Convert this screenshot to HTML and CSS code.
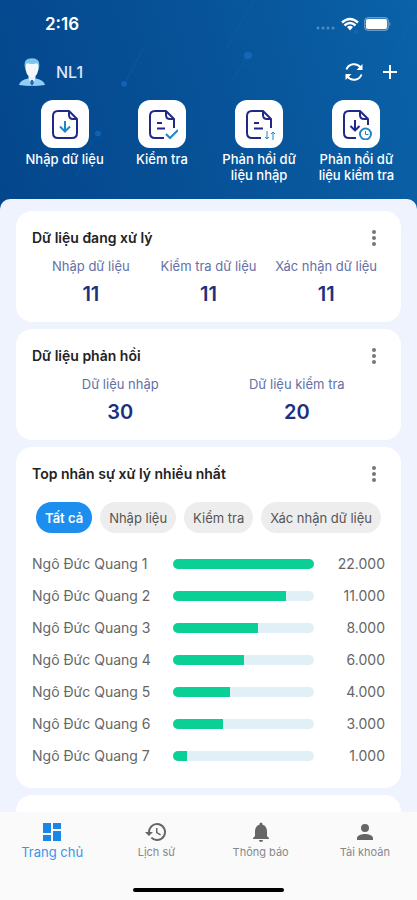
FILE: index.html
```html
<!DOCTYPE html>
<html lang="vi">
<head>
<meta charset="utf-8">
<meta name="viewport" content="width=device-width, initial-scale=1">
<title>Trang chủ</title>
<link rel="stylesheet" href="styles.css">
</head>
<body>
<header class="hero">
  <svg class="hero-art" viewBox="0 0 417 220" preserveAspectRatio="none" aria-hidden="true">
    <g stroke="#2680c8" stroke-opacity=".18" fill="none">
      <path d="M254 0L225 54M248 58L232 86M417 16L394 56M352 190L375 151M124 90L144 50M76 188L92 150"/>
    </g>
    <g fill="#1e78d0" fill-opacity=".5">
      <circle cx="124" cy="89" r="3"/><circle cx="248" cy="59" r="4"/><circle cx="98" cy="142" r="3"/><circle cx="356" cy="34" r="2" fill-opacity=".4"/>
    </g>
  </svg>
  <div class="status">
    <span class="time">2:16</span>
    <svg width="76" height="14" viewBox="0 0 76 14" aria-hidden="true">
      <g fill="#fff" fill-opacity=".3"><circle cx="3" cy="11" r="1.500"/><circle cx="8" cy="11" r="1.500"/><circle cx="13" cy="11" r="1.500"/><circle cx="18" cy="11" r="1.500"/></g>
      <g fill="none" stroke="#fff" stroke-width="2.500"><path d="M27 5.500Q35-1.500 43 5.500M29.500 8.500Q35 3.500 40.500 8.500"/></g>
      <path d="M32 10Q35 7.500 38 10L35 13.500z" fill="#fff"/>
      <rect x="49.500" y=".5" width="24" height="13" rx="3.500" fill="#fff" fill-opacity=".2" stroke="#fff" stroke-opacity=".3"/>
      <rect x="51" y="2" width="21" height="10" rx="2" fill="#fff"/>
      <path d="M74.500 5q2 2 0 4z" fill="#fff" fill-opacity=".5"/>
    </svg>
  </div>
  <div class="account">
    <svg width="26" height="28" viewBox="0 0 26 28" aria-hidden="true">
      <path d="M0 27Q1 22 9 20.500L13 24L17 20.500Q25 22 26 27Q13 29 0 27z" fill="#8fd0f4"/>
      <path d="M9.500 17v4l3.500 6 3.500-6v-4z" fill="#e6f3fb"/>
      <path d="M12 22h2l1 3-2 3-2-3z" fill="#2c6ca8"/>
      <path d="M6 6Q6 18 13 20Q20 18 20 6Q13 1 6 6z" fill="#f4f8fd"/>
      <path d="M6 10Q4 1 11 .5Q22-1 20 10L18.500 5Q13 7 7.500 5z" fill="#82c4e8"/>
    </svg>
    <span class="user">NL1</span>
    <button class="bare" type="button" aria-label="Làm mới">
      <svg width="20" height="20" viewBox="0 0 20 20" fill="none" stroke="#fff" stroke-width="2"><path d="M2.500 7.500A8 8 0 0 1 16.500 5.500M17.500 12.500A8 8 0 0 1 3.500 14.500"/><path d="M18.500 2v6h-6zM1.500 18v-6h6z" fill="#fff" stroke="none"/></svg>
    </button>
    <button class="bare" type="button" aria-label="Thêm">
      <svg width="16" height="16" viewBox="0 0 16 16" fill="none" stroke="#fff" stroke-width="2"><path d="M8 1v14M1 8h14"/></svg>
    </button>
  </div>
  <nav class="actions" aria-label="Chức năng">
    <a href="#nhap"><span class="tile"><svg width="32" height="32" viewBox="0 0 32 32"><path class="doc" d="M20 3H9Q4 3 4 8v17q0 5 5 5h14q5 0 5-5V11zM20 3v4q0 4 4 4h4"/><path class="accent" d="M16 13v10M11 18.500l5 5 5-5"/></svg></span>Nhập dữ liệu</a>
    <a href="#kiemtra"><span class="tile"><svg width="32" height="32" viewBox="0 0 32 32"><path class="doc" d="M18 30H9Q4 30 4 25V8Q4 3 9 3h11l8 8v9M20 3v4q0 4 4 4h4M11 15h5M11 20.500h8"/><path class="accent" d="M20 26l4 4 8-8"/></svg></span>Kiểm tra</a>
    <a href="#phanhoi-nhap"><span class="tile"><svg width="32" height="32" viewBox="0 0 32 32"><path class="doc" d="M18 30H9Q4 30 4 25V8Q4 3 9 3h11l8 8v9M20 3v4q0 4 4 4h4M11 15h5M11 20.500h9"/><path class="accent dash" d="M24 23v8M22 29l2 2 2-2M30 32v-8M28 26l2-2 2 2"/></svg></span>Phản hồi dữ liệu nhập</a>
    <a href="#phanhoi-kiemtra"><span class="tile"><svg width="32" height="32" viewBox="0 0 32 32"><path class="doc" d="M16 30H9Q4 30 4 25V8Q4 3 9 3h11l8 8v6M20 3v4q0 4 4 4h4M15 12v10M10.500 18l4.500 4.500 4.500-4.500"/><circle class="accent" cx="25.500" cy="26" r="5.500"/><path class="accent thin" d="M25.500 23v3.500h3"/></svg></span>Phản hồi dữ liệu kiểm tra</a>
  </nav>
</header>

<main class="content">
  <section class="card">
    <div class="card-head"><h2>Dữ liệu đang xử lý</h2><button class="more" type="button" aria-label="Tùy chọn"><i></i><i></i><i></i></button></div>
    <dl class="stats">
      <div><dt>Nhập dữ liệu</dt><dd>11</dd></div>
      <div><dt>Kiểm tra dữ liệu</dt><dd>11</dd></div>
      <div><dt>Xác nhận dữ liệu</dt><dd>11</dd></div>
    </dl>
  </section>
  <section class="card">
    <div class="card-head"><h2>Dữ liệu phản hồi</h2><button class="more" type="button" aria-label="Tùy chọn"><i></i><i></i><i></i></button></div>
    <dl class="stats">
      <div><dt>Dữ liệu nhập</dt><dd>30</dd></div>
      <div><dt>Dữ liệu kiểm tra</dt><dd>20</dd></div>
    </dl>
  </section>
  <section class="card">
    <div class="card-head"><h2>Top nhân sự xử lý nhiều nhất</h2><button class="more" type="button" aria-label="Tùy chọn"><i></i><i></i><i></i></button></div>
    <div class="chips">
      <button class="chip active" type="button">Tất cả</button>
      <button class="chip" type="button">Nhập liệu</button>
      <button class="chip" type="button">Kiểm tra</button>
      <button class="chip" type="button">Xác nhận dữ liệu</button>
    </div>
    <table class="ranking">
      <tbody>
        <tr><th scope="row">Ngô Đức Quang 1</th><td><div class="bar"><div class="fill" style="width:100%"></div></div></td><td class="num">22.000</td></tr>
        <tr><th scope="row">Ngô Đức Quang 2</th><td><div class="bar"><div class="fill" style="width:80%"></div></div></td><td class="num">11.000</td></tr>
        <tr><th scope="row">Ngô Đức Quang 3</th><td><div class="bar"><div class="fill" style="width:60%"></div></div></td><td class="num">8.000</td></tr>
        <tr><th scope="row">Ngô Đức Quang 4</th><td><div class="bar"><div class="fill" style="width:50%"></div></div></td><td class="num">6.000</td></tr>
        <tr><th scope="row">Ngô Đức Quang 5</th><td><div class="bar"><div class="fill" style="width:40%"></div></div></td><td class="num">4.000</td></tr>
        <tr><th scope="row">Ngô Đức Quang 6</th><td><div class="bar"><div class="fill" style="width:35%"></div></div></td><td class="num">3.000</td></tr>
        <tr><th scope="row">Ngô Đức Quang 7</th><td><div class="bar"><div class="fill" style="width:10%"></div></div></td><td class="num">1.000</td></tr>
      </tbody>
    </table>
  </section>
  <section class="card next"></section>
</main>

<footer class="tabbar">
  <nav class="tabs" aria-label="Điều hướng">
    <a class="current" href="#home"><svg width="24" height="24" viewBox="0 0 24 24"><path d="M3 13h8V3H3v10zm0 8h8v-6H3v6zm10 0h8V11h-8v10zm0-18v6h8V3h-8z"/></svg>Trang chủ</a>
    <a href="#history"><svg width="24" height="24" viewBox="0 0 24 24"><path d="M13 3a9 9 0 0 0-9 9H1l3.890 3.890.07.14L9 12H6a7 7 0 1 1 2.060 4.940l-1.420 1.420A9 9 0 1 0 13 3zm-1 5v5l4.280 2.540.72-1.210-3.500-2.080V8z"/></svg>Lịch sử</a>
    <a href="#notice"><svg width="24" height="24" viewBox="0 0 24 24"><path d="M12 22c1.100 0 2-.9 2-2h-4c0 1.100.89 2 2 2zm6-6v-5c0-3.070-1.640-5.640-4.500-6.320V4a1.500 1.500 0 0 0-3 0v.68C7.630 5.360 6 7.920 6 11v5l-2 2v1h16v-1z"/></svg>Thông báo</a>
    <a href="#account"><svg width="24" height="24" viewBox="0 0 24 24"><path d="M12 12a4 4 0 1 0 0-8 4 4 0 0 0 0 8zm0 2c-2.670 0-8 1.340-8 4v2h16v-2c0-2.660-5.330-4-8-4z"/></svg>Tài khoản</a>
  </nav>
  <div class="home-line"></div>
</footer>
</body>
</html>
```
FILE: styles.css
```css
* { box-sizing: border-box; }

body {
  margin: 0;
  height: 100vh;
  display: flex;
  flex-direction: column;
  overflow: hidden;
  background: #075298;
  font-family: Inter, "Noto Sans", sans-serif;
  font-size: 13px;
  line-height: 16px;
}

button { border: 0; font: inherit; cursor: pointer; }
a { color: inherit; text-decoration: none; }
svg { display: block; flex: none; }

.hero {
  position: relative;
  flex: none;
  color: #fff;
  background: linear-gradient(75deg, #04468c 0%, #075298 50%, #0a62a8 100%);
  padding: 14px 0 24px;
  margin-bottom: -8px;
}
.hero-art { position: absolute; inset: 0; width: 100%; height: 100%; }

.status {
  position: relative;
  display: flex;
  align-items: center;
  justify-content: space-between;
  height: 20px;
  padding: 0 26px 0 45px;
}
.time { font-size: 17px; font-weight: 600; }

.account {
  position: relative;
  display: flex;
  align-items: center;
  height: 40px;
  margin-top: 18px;
  padding: 0 19px;
}
.user { flex: 1; margin-left: 11px; font-size: 16px; font-weight: 500; color: #dde6fa; }
.bare { padding: 0; margin-left: 18px; background: none; }

.actions {
  position: relative;
  display: grid;
  grid-template-columns: repeat(4, 1fr);
  margin-top: 8px;
  padding: 0 12px 0 16px;
}
.actions a {
  display: flex;
  flex-direction: column;
  align-items: center;
  gap: 3px;
  text-align: center;
  font-weight: 500;
}
.tile {
  display: grid;
  place-items: center;
  width: 48px;
  height: 48px;
  border-radius: 12px;
  background: #fff;
}
.doc { fill: none; stroke: #20288a; stroke-width: 2; stroke-linejoin: round; }
.accent { fill: none; stroke: #2186c4; stroke-width: 2; }
.dash, .thin { stroke-width: 1; }

.content {
  position: relative;
  flex: 1;
  min-height: 0;
  overflow: hidden;
  display: flex;
  flex-direction: column;
  gap: 7px;
  padding: 12px 16px 0;
  border-radius: 10px 10px 0 0;
  background: #eef3fd;
}

.card { flex: none; padding: 16px; border-radius: 16px; background: #fff; }
.card-head { display: flex; align-items: center; justify-content: space-between; height: 22px; }
h2 { margin: 0; font-size: 14px; font-weight: 600; color: #222; }
.more {
  display: flex;
  flex-direction: column;
  align-items: center;
  gap: 2px;
  width: 22px;
  padding: 0;
  background: none;
}
.more i { width: 4px; height: 4px; border-radius: 50%; background: #777; }

.stats { display: flex; margin: 0; padding-top: 7px; }
.stats div { flex: 1; text-align: center; white-space: nowrap; }
dt { line-height: 20px; color: #6470a8; }
dd { margin: 7px 0 0; font-size: 20px; line-height: 23px; font-weight: 600; color: #1d3080; }

.chips { display: flex; gap: 8px; margin: 17px 0 15px; padding-left: 4px; }
.chip {
  height: 31px;
  padding: 0 9px;
  border-radius: 16px;
  background: #ededed;
  color: #555;
  white-space: nowrap;
}
.active { background: #1c8ef0; color: #fff; font-weight: 600; }

.ranking {
  width: 100%;
  table-layout: fixed;
  border-collapse: collapse;
  font-size: 14px;
  color: #666;
}
.ranking th, .ranking td { height: 32px; padding: 0; }
.ranking th { width: 40%; font-weight: 400; text-align: left; white-space: nowrap; }
.ranking td { width: 40%; }
.ranking .num { width: 20%; text-align: right; }
.bar { height: 10px; border-radius: 5px; overflow: hidden; background: #e0f0f6; }
.fill { height: 100%; background: #0bd096; }
.next { height: 120px; }

.tabbar { position: relative; flex: none; background: #fafafa; }
.tabs { display: grid; grid-template-columns: repeat(4, 1fr); padding-top: 8px; }
.tabs a {
  display: flex;
  flex-direction: column;
  align-items: center;
  font-size: 11px;
  color: #888;
}
.tabs svg { fill: #666; }
.tabs .current { font-size: 13px; color: #3b94ec; }
.tabs .current svg { fill: #1c86e8; }
.home-line { width: 36%; height: 4px; margin: 28px auto 8px; border-radius: 2px; background: #000; }
```
